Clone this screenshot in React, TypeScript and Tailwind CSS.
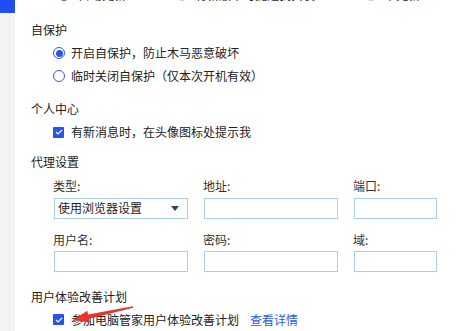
import React from 'react';

const font = { fontFamily: '"Noto Sans CJK SC", "Noto Sans", sans-serif' };

const Radio: React.FC<{ checked?: boolean; muted?: boolean }> = ({ checked, muted }) => (
  <span
    className={`flex h-[12px] w-[12px] shrink-0 items-center justify-center rounded-full border ${
      muted ? 'border-[#c8c8c8]' : 'border-[#2f5ae8]'
    } bg-white`}
  >
    {checked && <span className="h-[7px] w-[7px] rounded-full bg-[#2a55e8]" />}
  </span>
);

const Checkbox: React.FC = () => (
  <span className="flex h-[11px] w-[11px] shrink-0 items-center justify-center rounded-[1px] bg-[#2a52e6]">
    <svg width="8" height="6" viewBox="0 0 8 6" fill="none">
      <path d="M1 3l2 2 4-4" stroke="white" strokeWidth="1.2" />
    </svg>
  </span>
);

const Field: React.FC<{ w: string }> = ({ w }) => (
  <div className={`h-[21px] ${w} border border-[#a9cfea] bg-white`} />
);

export default function App() {
  return (
    <div className="flex h-[331px] w-[472px] overflow-hidden bg-white text-[12px] text-[#222]" style={font}>
      <div className="flex w-[15px] shrink-0 flex-col bg-[#f3f3f3]">
        <div className="h-[13px] bg-[#1f4ff0]" />
      </div>

      <div className="relative flex flex-1 flex-col pl-[16px]">
        {/* tail of the previous group, cut off by the window */}
        <div className="-mt-[13px] flex h-[16px] items-center pl-[27px] leading-[16px]">
          <Radio checked />
          <span className="ml-[8px]">自动更新</span>
          <span className="ml-[50px]">
            <Radio muted />
          </span>
          <span className="ml-[7px]">有新版本时提醒我安装</span>
          <span className="ml-[50px]">
            <Radio muted />
          </span>
          <span className="ml-[7px]">不更新</span>
        </div>

        <div className="mt-[19px] h-[16px] leading-[16px]">自保护</div>
        <div className="mt-[4px] flex h-[23px] items-center gap-[6px] pl-[22px]">
          <Radio checked />
          <span>开启自保护，防止木马恶意破坏</span>
        </div>
        <div className="flex h-[23px] items-center gap-[6px] pl-[22px]">
          <Radio />
          <span>临时关闭自保护（仅本次开机有效）</span>
        </div>

        <div className="mt-[14px] h-[16px] leading-[16px]">个人中心</div>
        <div className="mt-[4px] flex h-[23px] items-center gap-[7px] pl-[22px]">
          <Checkbox />
          <span>有新消息时，在头像图标处提示我</span>
        </div>

        <div className="mt-[10px] h-[16px] leading-[16px]">代理设置</div>
        <div className="mt-[8px] grid grid-cols-[134px_134px_83px] gap-x-[16px] pl-[23px] text-[#333]">
          <div className="-ml-[1px] h-[16px] leading-[16px]">类型:</div>
          <div className="-ml-[1px] h-[16px] leading-[16px]">地址:</div>
          <div className="-ml-[1px] h-[16px] leading-[16px]">端口:</div>

          <div className="mt-[4px] flex h-[21px] items-center justify-between border border-[#a9cfea] bg-white pl-[3px] pr-[8px] text-[#222]">
            <span>使用浏览器设置</span>
            <svg width="8" height="5" viewBox="0 0 8 5">
              <path d="M0 0h8L4 5z" fill="#1f4a5a" />
            </svg>
          </div>
          <div className="mt-[4px]">
            <Field w="w-[134px]" />
          </div>
          <div className="mt-[4px]">
            <Field w="w-[83px]" />
          </div>

          <div className="-ml-[1px] mt-[13px] h-[16px] leading-[16px]">用户名:</div>
          <div className="-ml-[1px] mt-[13px] h-[16px] leading-[16px]">密码:</div>
          <div className="-ml-[1px] mt-[13px] h-[16px] leading-[16px]">域:</div>

          <div className="mt-[3px]">
            <Field w="w-[134px]" />
          </div>
          <div className="mt-[3px]">
            <Field w="w-[134px]" />
          </div>
          <div className="mt-[3px]">
            <Field w="w-[83px]" />
          </div>
        </div>

        <div className="mt-[17px] h-[16px] leading-[16px]">用户体验改善计划</div>
        <div className="mt-[4px] flex h-[23px] items-center gap-[7px] pl-[22px]">
          <Checkbox />
          <span>参加电脑管家用户体验改善计划</span>
          <span className="ml-[4px] text-[#2a5ae8]">查看详情</span>
        </div>

        {/* red annotation arrow */}
        <svg className="absolute left-[45px] top-[300px]" width="80" height="28" viewBox="0 0 80 28">
          <polygon
            points="13,20 29.9,22.5 29.1,18.7 73.2,7.8 72.8,6.2 28.1,14.5 27.3,10.7"
            fill="#e8342c"
          />
        </svg>
      </div>
    </div>
  );
}
